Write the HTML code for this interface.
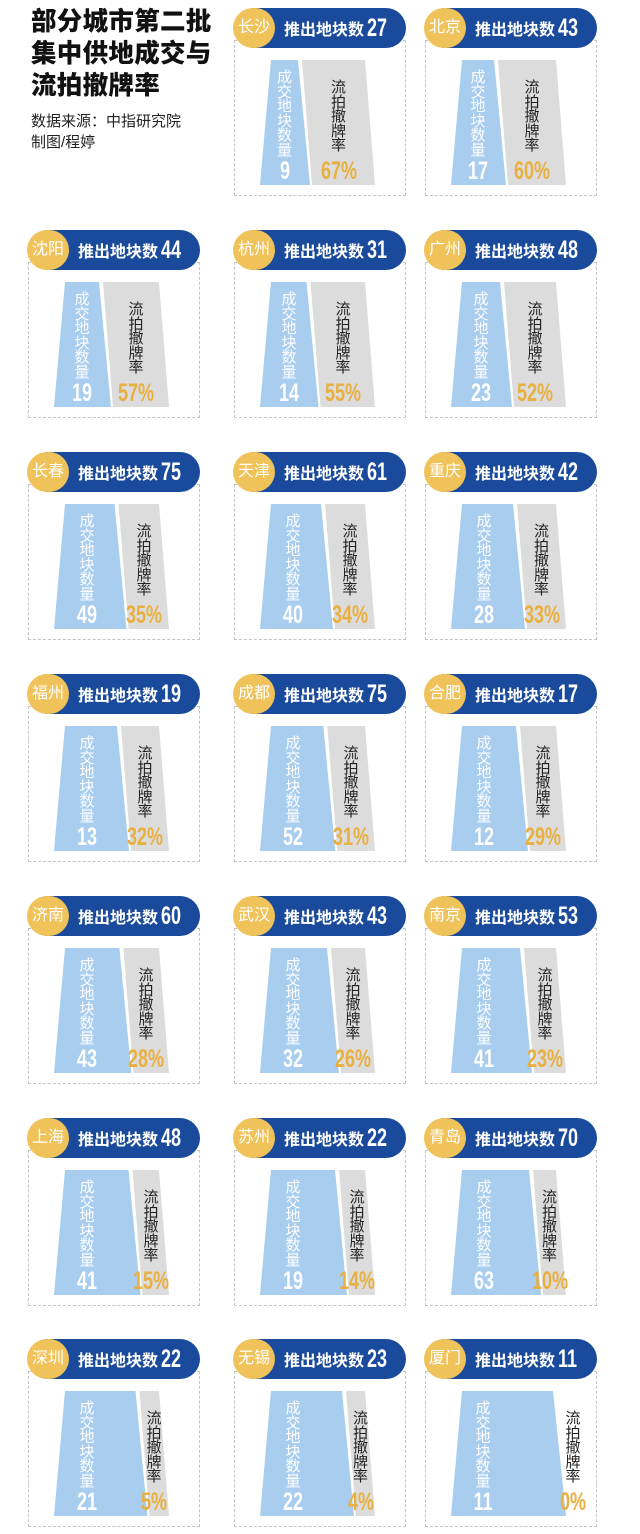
<!DOCTYPE html>
<html><head><meta charset="utf-8">
<style>
*{margin:0;padding:0;box-sizing:border-box}
body{width:640px;height:1534px;background:#fff;position:relative;overflow:hidden;font-family:"Liberation Sans","Noto Sans CJK SC",sans-serif}
.title{position:absolute;left:31px;top:6px;font-size:25.5px;font-weight:900;line-height:32px;color:#111;letter-spacing:0.3px}
.src{position:absolute;left:31px;top:111px;font-size:15px;line-height:21px;color:#222}
.cell{position:absolute;width:176px;height:195px}
.box{position:absolute;left:1px;top:32px;width:172px;height:156px;border:1px dashed #c4c4c4}
.pill{position:absolute;left:18px;top:0;width:155px;height:40px;background:#1a4a9b;border-radius:0 20px 20px 0}
.circ{position:absolute;left:0;top:0;width:42px;height:40px;border-radius:20px;background:#f0c25a;color:#fff;font-size:16px;line-height:40px;text-align:center}
.ht{position:absolute;left:51px;top:0;height:40px;line-height:40px;color:#fff;font-size:16px;font-weight:700;white-space:nowrap}
.ht b{display:inline-block;font-size:25px;font-weight:700;margin-left:3px;transform:scaleX(0.72);transform-origin:left center;vertical-align:-1px}
.sh{position:absolute;left:27px;top:52px;width:116px;height:125px}
.bl{position:absolute;inset:0;background:#a8cdef;clip-path:polygon(11px 0,calc(101px - var(--g)*1px) 0,calc(113px - var(--g)*1px) 100%,0 100%)}
.gr{position:absolute;inset:0;background:#dcdcdc;clip-path:polygon(calc(105px - var(--g)*1px) 0,105px 0,115px 100%,calc(115px - var(--g)*1px) 100%)}
.bt{position:absolute;top:11px;left:calc(var(--bc)*1px);transform:translateX(-50%);width:16px;font-size:15px;line-height:14.6px;color:#fff;text-align:center}
.gt{position:absolute;top:21px;left:calc(var(--gc)*1px);transform:translateX(-50%);width:16px;font-size:15px;line-height:14.6px;color:#222;text-align:center}
.n{position:absolute;top:99px;font-weight:700;font-size:25px;line-height:24px;transform:translateX(-50%) scaleX(0.72);white-space:nowrap}
.bn{left:calc(var(--bc)*1px);color:#fff}
.gn{left:calc(var(--gc)*1px);color:#e8b040}
</style></head><body>
<div class="title">部分城市第二批<br>集中供地成交与<br>流拍撤牌率</div>
<div class="src">数据来源：中指研究院<br>制图/程婷</div>

<div class="cell" style="left:233px;top:8px;--g:63;--bc:24.5;--gc:78.5"><div class="box"></div><div class="pill"></div><div class="circ">长沙</div><div class="ht">推出地块数<b>27</b></div><div class="sh"><div class="bl"></div><div class="gr"></div><div class="bt">成交地块数量</div><div class="gt">流拍撤牌率</div><div class="n bn">9</div><div class="n gn">67%</div></div></div>
<div class="cell" style="left:424px;top:8px;--g:58;--bc:27;--gc:81"><div class="box"></div><div class="pill"></div><div class="circ">北京</div><div class="ht">推出地块数<b>43</b></div><div class="sh"><div class="bl"></div><div class="gr"></div><div class="bt">成交地块数量</div><div class="gt">流拍撤牌率</div><div class="n bn">17</div><div class="n gn">60%</div></div></div>

<div class="cell" style="left:27px;top:230px;--g:56;--bc:28;--gc:82"><div class="box"></div><div class="pill"></div><div class="circ">沈阳</div><div class="ht">推出地块数<b>44</b></div><div class="sh"><div class="bl"></div><div class="gr"></div><div class="bt">成交地块数量</div><div class="gt">流拍撤牌率</div><div class="n bn">19</div><div class="n gn">57%</div></div></div>
<div class="cell" style="left:233px;top:230px;--g:54.5;--bc:29;--gc:83"><div class="box"></div><div class="pill"></div><div class="circ">杭州</div><div class="ht">推出地块数<b>31</b></div><div class="sh"><div class="bl"></div><div class="gr"></div><div class="bt">成交地块数量</div><div class="gt">流拍撤牌率</div><div class="n bn">14</div><div class="n gn">55%</div></div></div>
<div class="cell" style="left:424px;top:230px;--g:52;--bc:30;--gc:84"><div class="box"></div><div class="pill"></div><div class="circ">广州</div><div class="ht">推出地块数<b>48</b></div><div class="sh"><div class="bl"></div><div class="gr"></div><div class="bt">成交地块数量</div><div class="gt">流拍撤牌率</div><div class="n bn">23</div><div class="n gn">52%</div></div></div>

<div class="cell" style="left:27px;top:452px;--g:40.5;--bc:33;--gc:90"><div class="box"></div><div class="pill"></div><div class="circ">长春</div><div class="ht">推出地块数<b>75</b></div><div class="sh"><div class="bl"></div><div class="gr"></div><div class="bt">成交地块数量</div><div class="gt">流拍撤牌率</div><div class="n bn">49</div><div class="n gn">35%</div></div></div>
<div class="cell" style="left:233px;top:452px;--g:40;--bc:33;--gc:90"><div class="box"></div><div class="pill"></div><div class="circ">天津</div><div class="ht">推出地块数<b>61</b></div><div class="sh"><div class="bl"></div><div class="gr"></div><div class="bt">成交地块数量</div><div class="gt">流拍撤牌率</div><div class="n bn">40</div><div class="n gn">34%</div></div></div>
<div class="cell" style="left:424px;top:452px;--g:39;--bc:33;--gc:90.5"><div class="box"></div><div class="pill"></div><div class="circ">重庆</div><div class="ht">推出地块数<b>42</b></div><div class="sh"><div class="bl"></div><div class="gr"></div><div class="bt">成交地块数量</div><div class="gt">流拍撤牌率</div><div class="n bn">28</div><div class="n gn">33%</div></div></div>

<div class="cell" style="left:27px;top:674px;--g:38;--bc:33;--gc:91"><div class="box"></div><div class="pill"></div><div class="circ">福州</div><div class="ht">推出地块数<b>19</b></div><div class="sh"><div class="bl"></div><div class="gr"></div><div class="bt">成交地块数量</div><div class="gt">流拍撤牌率</div><div class="n bn">13</div><div class="n gn">32%</div></div></div>
<div class="cell" style="left:233px;top:674px;--g:37.7;--bc:33;--gc:91"><div class="box"></div><div class="pill"></div><div class="circ">成都</div><div class="ht">推出地块数<b>75</b></div><div class="sh"><div class="bl"></div><div class="gr"></div><div class="bt">成交地块数量</div><div class="gt">流拍撤牌率</div><div class="n bn">52</div><div class="n gn">31%</div></div></div>
<div class="cell" style="left:424px;top:674px;--g:36;--bc:33;--gc:92"><div class="box"></div><div class="pill"></div><div class="circ">合肥</div><div class="ht">推出地块数<b>17</b></div><div class="sh"><div class="bl"></div><div class="gr"></div><div class="bt">成交地块数量</div><div class="gt">流拍撤牌率</div><div class="n bn">12</div><div class="n gn">29%</div></div></div>

<div class="cell" style="left:27px;top:896px;--g:35.6;--bc:33;--gc:92"><div class="box"></div><div class="pill"></div><div class="circ">济南</div><div class="ht">推出地块数<b>60</b></div><div class="sh"><div class="bl"></div><div class="gr"></div><div class="bt">成交地块数量</div><div class="gt">流拍撤牌率</div><div class="n bn">43</div><div class="n gn">28%</div></div></div>
<div class="cell" style="left:233px;top:896px;--g:34;--bc:33;--gc:93"><div class="box"></div><div class="pill"></div><div class="circ">武汉</div><div class="ht">推出地块数<b>43</b></div><div class="sh"><div class="bl"></div><div class="gr"></div><div class="bt">成交地块数量</div><div class="gt">流拍撤牌率</div><div class="n bn">32</div><div class="n gn">26%</div></div></div>
<div class="cell" style="left:424px;top:896px;--g:32;--bc:33;--gc:94"><div class="box"></div><div class="pill"></div><div class="circ">南京</div><div class="ht">推出地块数<b>53</b></div><div class="sh"><div class="bl"></div><div class="gr"></div><div class="bt">成交地块数量</div><div class="gt">流拍撤牌率</div><div class="n bn">41</div><div class="n gn">23%</div></div></div>

<div class="cell" style="left:27px;top:1118px;--g:26.5;--bc:33;--gc:97"><div class="box"></div><div class="pill"></div><div class="circ">上海</div><div class="ht">推出地块数<b>48</b></div><div class="sh"><div class="bl"></div><div class="gr"></div><div class="bt">成交地块数量</div><div class="gt">流拍撤牌率</div><div class="n bn">41</div><div class="n gn">15%</div></div></div>
<div class="cell" style="left:233px;top:1118px;--g:26;--bc:33;--gc:97"><div class="box"></div><div class="pill"></div><div class="circ">苏州</div><div class="ht">推出地块数<b>22</b></div><div class="sh"><div class="bl"></div><div class="gr"></div><div class="bt">成交地块数量</div><div class="gt">流拍撤牌率</div><div class="n bn">19</div><div class="n gn">14%</div></div></div>
<div class="cell" style="left:424px;top:1118px;--g:23;--bc:33;--gc:98.5"><div class="box"></div><div class="pill"></div><div class="circ">青岛</div><div class="ht">推出地块数<b>70</b></div><div class="sh"><div class="bl"></div><div class="gr"></div><div class="bt">成交地块数量</div><div class="gt">流拍撤牌率</div><div class="n bn">63</div><div class="n gn">10%</div></div></div>

<div class="cell" style="left:27px;top:1339px;--g:19.5;--bc:33;--gc:100"><div class="box"></div><div class="pill"></div><div class="circ">深圳</div><div class="ht">推出地块数<b>22</b></div><div class="sh"><div class="bl"></div><div class="gr"></div><div class="bt">成交地块数量</div><div class="gt">流拍撤牌率</div><div class="n bn">21</div><div class="n gn">5%</div></div></div>
<div class="cell" style="left:233px;top:1339px;--g:19;--bc:33;--gc:100.5"><div class="box"></div><div class="pill"></div><div class="circ">无锡</div><div class="ht">推出地块数<b>23</b></div><div class="sh"><div class="bl"></div><div class="gr"></div><div class="bt">成交地块数量</div><div class="gt">流拍撤牌率</div><div class="n bn">22</div><div class="n gn">4%</div></div></div>
<div class="cell" style="left:424px;top:1339px;--g:0;--bc:32;--gc:122"><div class="box"></div><div class="pill"></div><div class="circ">厦门</div><div class="ht">推出地块数<b>11</b></div><div class="sh"><div class="bl" style="clip-path:polygon(11px 0,102px 0,115px 100%,0 100%)"></div><div class="bt">成交地块数量</div><div class="gt">流拍撤牌率</div><div class="n bn">11</div><div class="n gn">0%</div></div></div>
</body></html>
